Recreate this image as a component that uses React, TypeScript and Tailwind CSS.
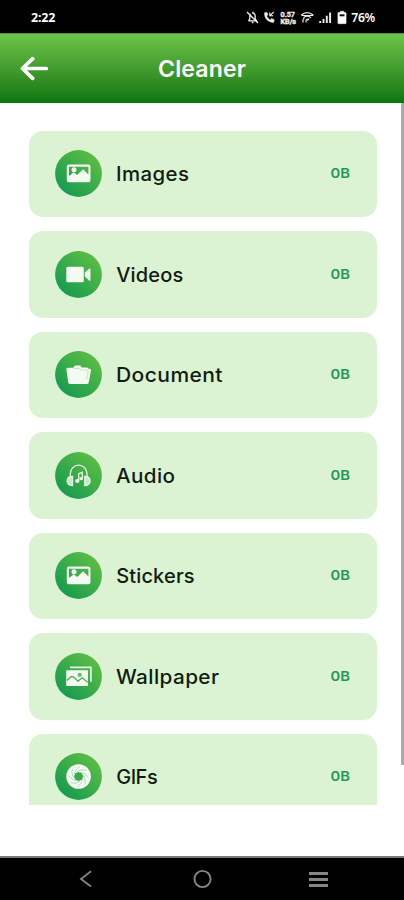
import React from "react";

function PictureIcon() {
  return (
    <>
      <path fillRule="evenodd" fill="#f3faf2" d="M13.8 14.5h19.7a2 2 0 0 1 2 2v13.7a2 2 0 0 1-2 2H13.8a2 2 0 0 1-2-2V16.500a2 2 0 0 1 2-2ZM14 16.800V26l4.800-3.700 3.300 2.800 6-5.900 5.300 5.300v-7.700Z" />
      <circle cx="19" cy="19.800" r="2.500" fill="#f3faf2" />
    </>
  );
}

function VideoIcon() {
  return (
    <>
      <rect x="11.300" y="15.800" width="17.500" height="15.500" rx="1.500" fill="#f3faf2" />
      <path d="m29.800 21.800 4.200-4q1.500-.7 1.500.7v10.200q0 1.400-1.500.7l-4.200-4Z" fill="#f3faf2" />
    </>
  );
}

function FolderIcon() {
  return (
    <>
      <path d="M13.200 31.500 11.400 18.600q-.2-1.800 1.500-1.800h5.300l1.900-2.400h5.200l1.700 2.200h4.600q1.500 0 1.700 1.200h1.500q1.500 0 1.200 1.600l-2.300 12q-.3 1.500-1.900 1.500H14.800q-1.400 0-1.600-1.400Z" fill="#f3faf2" />
      <path d="M18.700 17.500h6l1.500 1.400h5.500q1.500.1 1.300 1.500l-1 8" fill="none" stroke="#a5d9ae" strokeWidth=".6" />
    </>
  );
}

function HeadphoneIcon() {
  return (
    <g fill="none" stroke="#e8f7e4" strokeWidth="1.300">
      <path d="M15.300 24v-2.500a8.300 8.300 0 0 1 16.700 0V24" />
      <path d="M17.500 24.500v9c-3.600.1-5.300-1.800-5.300-4.500s1.700-4.500 5.300-4.500ZM29.800 24.500v9c3.600.1 5.300-1.800 5.300-4.500s-1.700-4.500-5.300-4.500Z" fill="#c4e9c2" />
      <path d="M23.700 28.800v-7.200l3.600-1.300v6.200" />
      <ellipse cx="22.300" cy="29" rx="1.500" ry="1.300" fill="#e8f7e4" />
      <ellipse cx="26.200" cy="26.700" rx="1.100" ry="1" fill="#e8f7e4" />
    </g>
  );
}

function GalleryIcon() {
  return (
    <g transform="translate(-.3 -.5)">
      <path d="M15.300 14.800h20.900v14.500" fill="none" stroke="#e3f4e0" strokeWidth="1.700" />
      <rect x="11.500" y="17.700" width="21.800" height="15.800" rx=".8" fill="#f3faf2" />
      <path d="m12 27.900 4.700-4 2 .5 4.600 4.300 4.200-3.400 5.500 4.400" fill="none" stroke="#45ae52" strokeWidth="1.300" />
      <circle cx="25" cy="22.400" r="2.100" fill="#66b96d" />
    </g>
  );
}

function ApertureIcon() {
  return (
    <>
      <circle cx="23.600" cy="23.500" r="12.300" fill="#f3faf2" />
      <polygon points="23.600,18.900 26.900,20.200 28.200,23.500 26.900,26.800 23.600,28.100 20.300,26.800 19,23.500 20.300,20.200" fill="#3cab4e" />
      {[0, 45, 90, 135, 180, 225, 270, 315].map((angle) => (
        <path key={angle} d="M25.800 19.200q4.500.4 7.600 5.300" fill="none" stroke="#85c98d" strokeWidth=".6" transform={`rotate(${angle} 23.600 23.500)`} />
      ))}
    </>
  );
}

const rows = [
  { label: "Images", icon: <PictureIcon />, fit: "tracking-[0.4px] scale-x-[1.02]" },
  { label: "Videos", icon: <VideoIcon />, fit: "tracking-[0.2px]" },
  { label: "Document", icon: <FolderIcon />, fit: "tracking-[0.4px] scale-x-[1.052]" },
  { label: "Audio", icon: <HeadphoneIcon />, fit: "tracking-[0.4px] scale-x-[1.03]" },
  { label: "Stickers", icon: <PictureIcon />, fit: "tracking-[0.15px]" },
  { label: "Wallpaper", icon: <GalleryIcon />, fit: "tracking-[0.4px] scale-x-[1.036]" },
  { label: "GIFs", icon: <ApertureIcon />, fit: "tracking-[-0.5px]" },
];

function StatusBar() {
  return (
    <div className="flex h-[33px] shrink-0 items-center justify-between bg-black pl-[31px] pr-[29px] text-white">
      <span className="pt-[3px] font-['Noto_Sans',sans-serif] text-[12.400px] leading-none font-bold tracking-[-0.1px]">2:22</span>
      <div className="flex items-center pt-[2px]">
        <svg width="103" height="16" viewBox="0 0 103 16" fill="none" stroke="#eee" strokeWidth="1.300">
          <g transform="translate(1 -.5)">
            <path d="M2.500 11.300h8L9.200 9.500V6.500a3 3 0 0 0-2.400-3V2.300M4.600 4.500q-.8.900-.8 2.200v2.800l-1.300 1.800M5.800 13h1.600M1 2.500l11 11" />
            <path d="M18.600 3.200c-.5 5.500 3.300 9.500 9 9.700l.6-2.700-2.600-1.100-1.400 1.300q-2.600-1.300-3.600-3.800L22 5.300 21 2.900Z" fill="#eee" strokeWidth=".5" />
            <path d="M23.800 3v3.300h3.400M24.100 6l3.600-3.600" strokeWidth="1.100" />
          </g>
          <text x="35.500" y="6.500" fill="#eee" stroke="#eee" strokeWidth=".4" fontFamily="Roboto, sans-serif" fontSize="7.500" fontWeight="700" textLength="14.500" lengthAdjust="spacingAndGlyphs">0.57</text>
          <text x="35.500" y="13.700" fill="#eee" stroke="#eee" strokeWidth=".4" fontFamily="Roboto, sans-serif" fontSize="6.500" fontWeight="700" textLength="15.500" lengthAdjust="spacingAndGlyphs">KB/s</text>
          <g transform="translate(1 -.5)">
            <path d="M55 5.700q6-5 12.500 0M57.500 8.200q3.700-3 7.500 0" />
            <path d="M56 6h11M57 13v-2.500q0-1.500 1.500-1.500M60 13v-2q0-1.500 1.700-1.500M63 9l-1.500 2.200" strokeWidth="1.200" />
          </g>
          <path d="M75.200 13v-2M78.500 13V9M81.800 13V5.800M85.100 13V2.500" strokeWidth="1.900" />
          <path d="M95.300 2.500V1.300h3.500v1.200h1.700q.6 0 .6.600v9.900q0 .7-.7.700h-6.800q-.7 0-.7-.7V3.100q0-.6.6-.6Z" fill="#fff" strokeWidth=".5" />
          <path d="M94.600 4.300h4.900v2h-4.900z" fill="#111" stroke="none" />
        </svg>
        <span className="ml-[3px] pt-[1px] font-['Noto_Sans',sans-serif] text-[12.200px] leading-none font-semibold tracking-[-0.3px]">76%</span>
      </div>
    </div>
  );
}

function Header() {
  return (
    <header className="grid h-[70px] shrink-0 grid-cols-[1fr_auto_1fr] items-center border-t border-[#4d8f38] bg-linear-to-b from-[#6dc54a] to-[#087510]">
      <svg className="-mt-[2px] ml-[20px]" width="30" height="26" viewBox="0 0 30 26" fill="none" stroke="#fff" strokeWidth="3.700" strokeLinecap="round" strokeLinejoin="round">
        <path d="M26.300 13.500H3M12.700 3.700 2.500 13.500l10.200 9.800" />
      </svg>
      <h1 className="pt-[2px] text-[23px] leading-none font-semibold tracking-[0.15px] text-white">Cleaner</h1>
    </header>
  );
}

function NavigationBar() {
  return (
    <nav className="grid h-[44px] shrink-0 grid-cols-[1fr_32px_1fr] items-center border-t-2 border-[#777] bg-black">
      <svg className="ml-[77px]" width="18" height="18" viewBox="0 0 18 18" fill="none" stroke="#858585" strokeWidth="1.800">
        <path d="M14 1.200 4 9l10 7.500" />
      </svg>
      <svg className="mx-auto" width="20" height="20" viewBox="0 0 20 20" fill="none" stroke="#858585" strokeWidth="1.900">
        <circle cx="10.500" cy="10" r="8.100" />
      </svg>
      <div className="ml-[91px] flex w-[19px] flex-col gap-[3px] pt-px">
        <span className="h-[3px] bg-[#858585]" />
        <span className="h-[3px] bg-[#858585]" />
        <span className="h-[3px] bg-[#858585]" />
      </div>
    </nav>
  );
}

export default function App() {
  return (
    <div className="flex h-[900px] w-[404px] flex-col overflow-hidden bg-white font-['Inter',sans-serif]">
      <StatusBar />
      <Header />
      <main className="flex min-h-0 flex-1 justify-between pl-[28.700px]">
        <div className="mt-[27.500px] flex h-[674.500px] w-[348px] flex-col gap-[14px] overflow-hidden">
          {rows.map(({ label, icon, fit }) => (
            <div key={label} className="flex h-[86.500px] shrink-0 items-center justify-between rounded-[14px] bg-[#dbf3d2] pr-[27px] pl-[26.500px]">
              <div className="flex items-center gap-[14px]">
                <svg width="47" height="47" viewBox="0 0 47 47">
                  <defs>
                    <linearGradient id={`badge-${label}`} x1=".1" y1=".9" x2=".85" y2=".1">
                      <stop stopColor="#159950" />
                      <stop offset="1" stopColor="#5dbd45" />
                    </linearGradient>
                  </defs>
                  <circle cx="23.500" cy="23.500" r="23.400" fill={`url(#badge-${label})`} />
                  {icon}
                </svg>
                <span className={`origin-left pt-px text-[20px] leading-none font-medium text-[#111c10] ${fit}`}>{label}</span>
              </div>
              <span className="origin-right scale-x-[1.15] pt-[2px] text-[12.800px] leading-none font-semibold text-[#229858]">0B</span>
            </div>
          ))}
        </div>
        <div className="h-[662px] w-[3px] bg-[#aaa]" />
      </main>
      <NavigationBar />
    </div>
  );
}
